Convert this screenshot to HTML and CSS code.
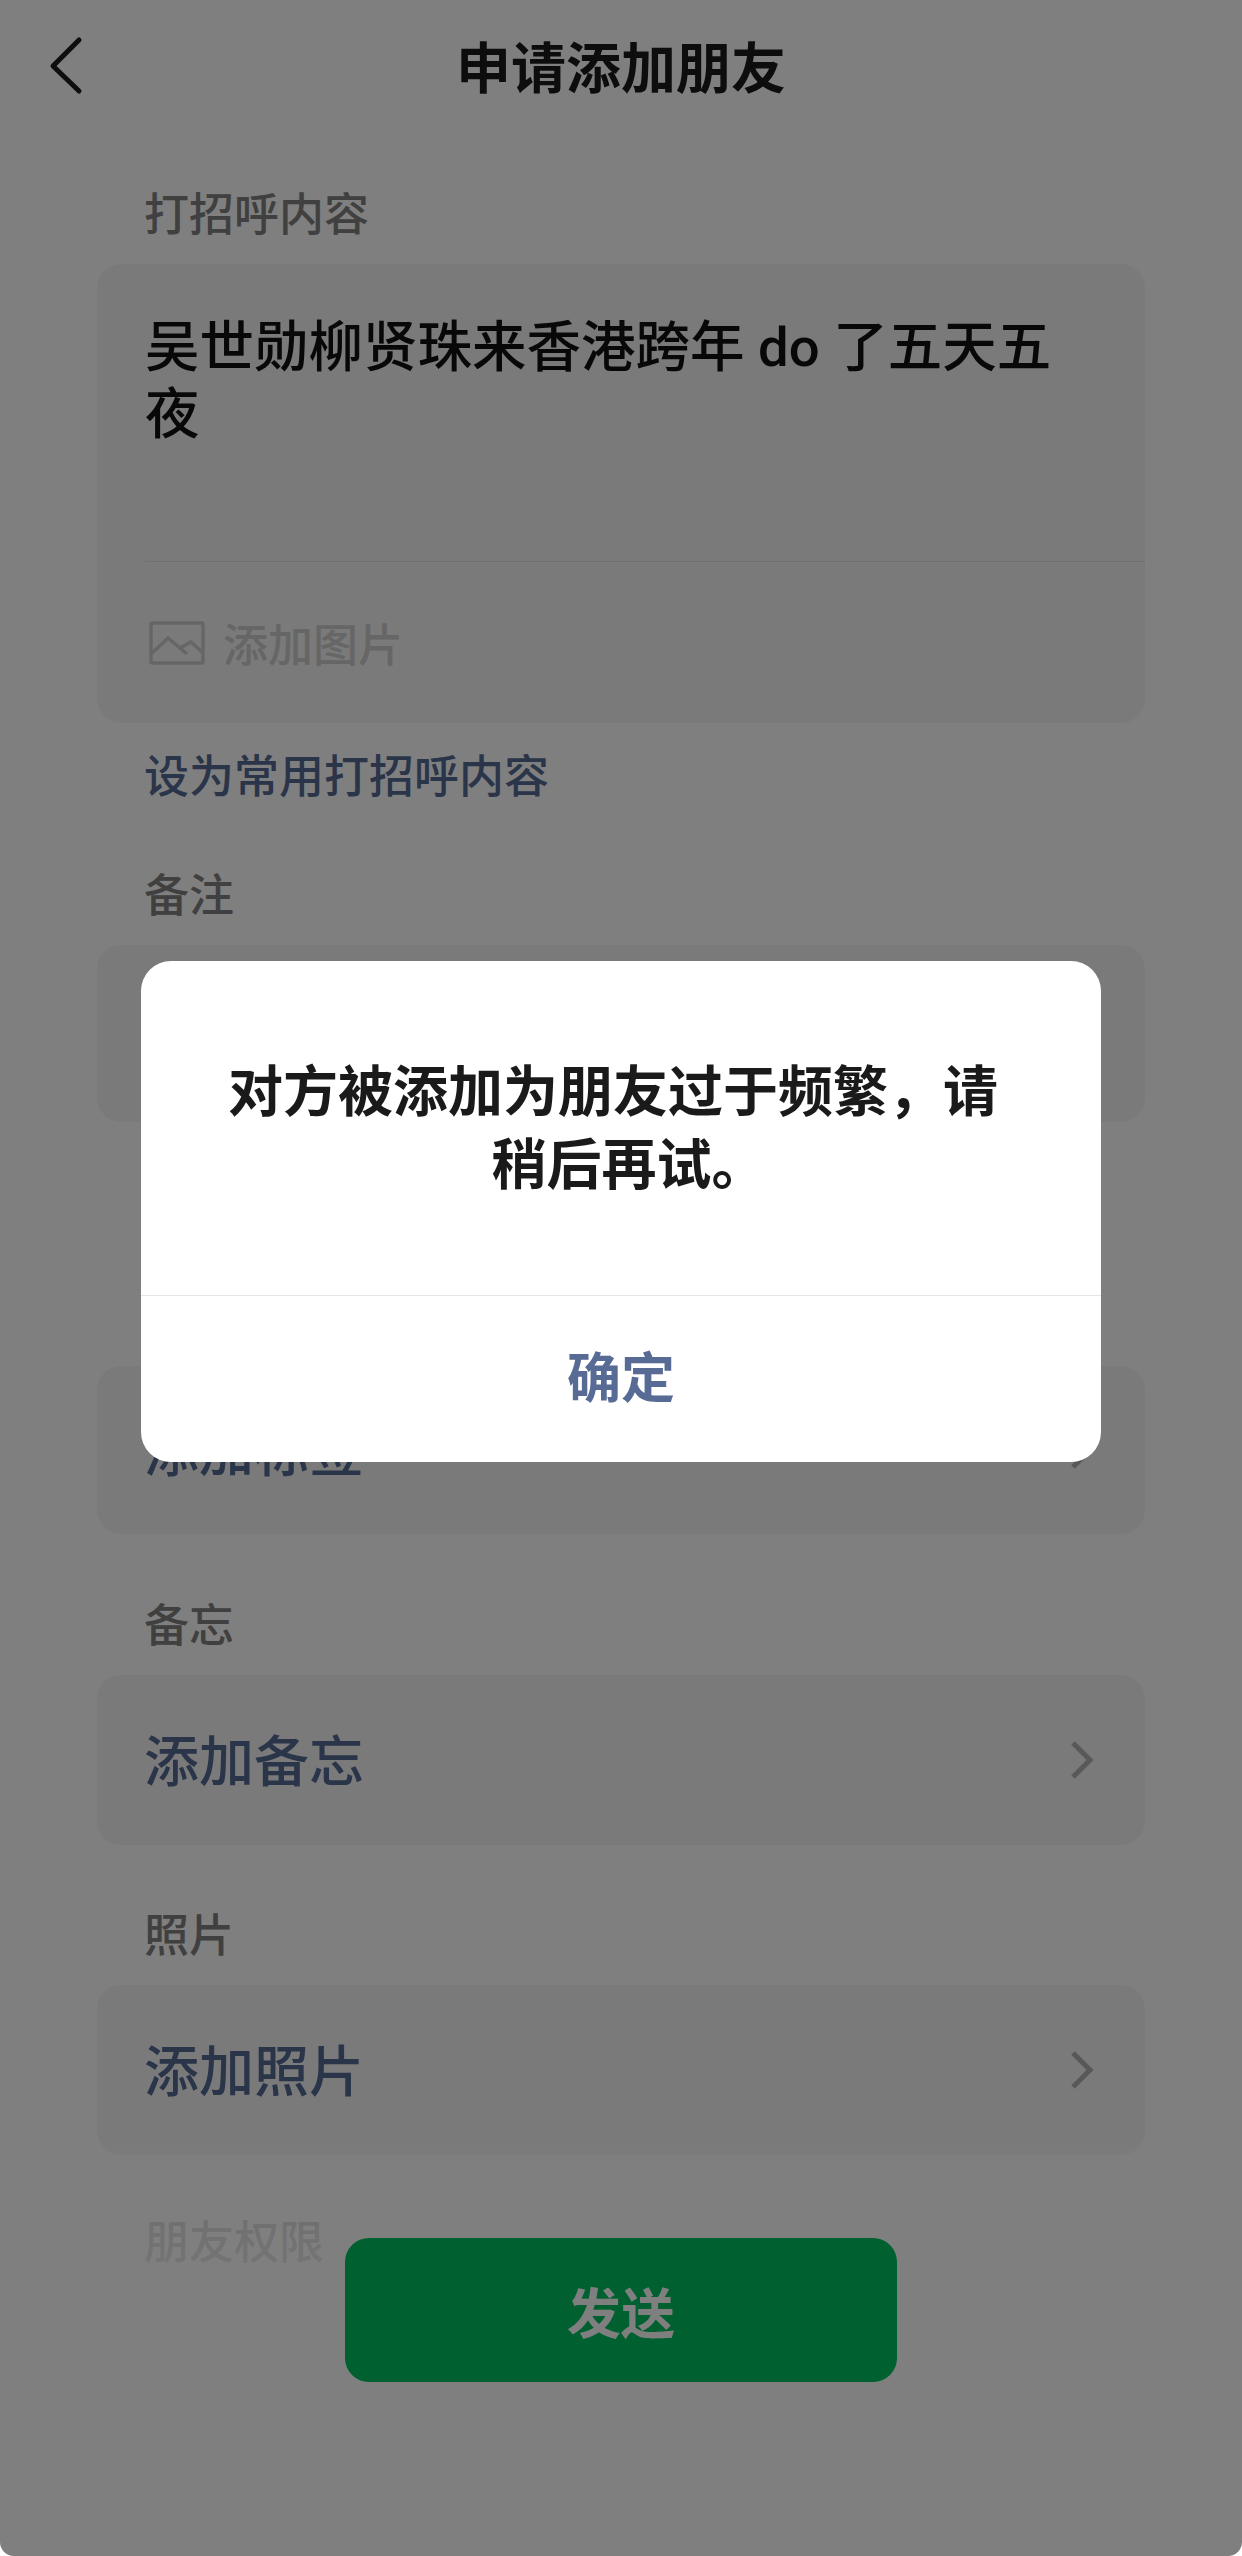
FILE: index.html
```html
<!DOCTYPE html>
<html lang="zh-CN">
<head>
    <meta charset="UTF-8">
    <meta name="viewport" content="width=device-width, initial-scale=1.0">
    <title>申请添加朋友</title>
    <link rel="stylesheet" href="styles.css">
</head>
<body>
    <div class="screen">
        <div class="nav">
            <svg class="back" width="36" height="60" viewBox="0 0 36 60">
                <path d="M31 5 L5 31 L31 56" fill="none" stroke="#1c1c1c" stroke-width="5" stroke-linecap="round" stroke-linejoin="round"/>
            </svg>
            <div class="nav-title">申请添加朋友</div>
        </div>

        <div class="content">
            <div class="label">打招呼内容</div>
            <div class="card">
                <div class="greeting">吴世勋柳贤珠来香港跨年 do 了五天五夜</div>
                <div class="add-image">
                    <svg width="56" height="44" viewBox="0 0 56 44">
                        <rect x="2" y="2" width="52" height="40" rx="1.5" fill="none" stroke="#cccccc" stroke-width="3.5"/>
                        <path d="M3 32 L19 17 L38 33 M31 27 L42 21 L53 31" fill="none" stroke="#cccccc" stroke-width="3.5"/>
                    </svg>
                    <span>添加图片</span>
                </div>
            </div>
            <div class="link">设为常用打招呼内容</div>

            <div class="label label-note">备注</div>
            <div class="card card-note"></div>

            <div class="card card-tag row">
                <span>添加标签</span>
                <svg class="arrow" width="24" height="40" viewBox="0 0 24 40">
                    <path d="M3 3 L20 20 L3 37" fill="none" stroke="#b0b0b0" stroke-width="5"/>
                </svg>
            </div>

            <div class="label label-memo">备忘</div>
            <div class="card row">
                <span>添加备忘</span>
                <svg class="arrow" width="24" height="40" viewBox="0 0 24 40">
                    <path d="M3 3 L20 20 L3 37" fill="none" stroke="#b0b0b0" stroke-width="5"/>
                </svg>
            </div>

            <div class="label label-photo">照片</div>
            <div class="card row">
                <span>添加照片</span>
                <svg class="arrow" width="24" height="40" viewBox="0 0 24 40">
                    <path d="M3 3 L20 20 L3 37" fill="none" stroke="#b0b0b0" stroke-width="5"/>
                </svg>
            </div>

            <div class="label label-perm">朋友权限</div>
        </div>

        <div class="footer">
            <button class="send">发送</button>
        </div>

        <div class="overlay">
            <div class="dialog">
                <div class="dialog-text">对方被添加为朋友过于频繁，请稍后再试。</div>
                <div class="dialog-ok">确定</div>
            </div>
        </div>
    </div>
</body>
</html>
```

FILE: styles.css
```css
html {
    background: #fff;
}
body {
    margin: 0;
    font-family: Roboto, "Noto Sans CJK SC", sans-serif;
}
.screen {
    position: relative;
    height: 2556px;
    overflow: hidden;
    background: #fff;
    border-radius: 0 0 14px 14px;
}
.nav {
    position: relative;
    height: 130px;
    display: flex;
    align-items: center;
    justify-content: center;
}
.nav-title {
    padding-bottom: 3px;
    font-size: 55px;
    font-weight: 700;
    color: #1a1a1a;
}
.back {
    position: absolute;
    left: 48px;
    top: 35px;
}
.content {
    padding: 54px 97px 0;
}
.label {
    height: 60px;
    line-height: 63px;
    padding-left: 47px;
    font-size: 45px;
    font-weight: 500;
    color: #808080;
}
.label-note {
    margin-top: 57px;
}
.label-memo {
    margin-top: 61px;
}
.label-photo {
    margin-top: 60px;
}
.label-perm {
    margin-top: 57px;
}
.card {
    margin-top: 20px;
    background: #f5f5f5;
    border-radius: 24px;
}
.greeting {
    box-sizing: border-box;
    height: 297px;
    padding: 50px 80px 0 48px;
    font-size: 54.5px;
    font-weight: 500;
    line-height: 67px;
    color: #111;
}
.add-image {
    height: 161px;
    margin-left: 48px;
    border-top: 1px solid #e0e0e0;
    display: flex;
    align-items: center;
    gap: 18px;
    padding-left: 4px;
    font-size: 45px;
    font-weight: 500;
    color: #cccccc;
}
.link {
    height: 60px;
    line-height: 60px;
    margin-top: 25px;
    padding-left: 47px;
    font-size: 45px;
    font-weight: 500;
    color: #576b95;
}
.card-note {
    height: 177px;
}
.row {
    height: 170px;
    padding: 0 51px 0 47px;
    display: flex;
    align-items: center;
    justify-content: space-between;
    font-size: 55px;
    font-weight: 500;
    color: #576b95;
}
.row span {
    padding-bottom: 6px;
}
.card-tag {
    height: 168px;
    margin-top: 244px;
}
/* the form fades out above the send button */
.footer {
    position: absolute;
    left: 0;
    right: 0;
    top: 2140px;
    bottom: 0;
    padding-top: 98px;
    display: flex;
    justify-content: center;
    align-items: flex-start;
    background: linear-gradient(rgba(255,255,255,0), rgba(255,255,255,0.76) 82px, rgba(255,255,255,0.82) 122px, #fff 150px);
}
.send {
    width: 552px;
    height: 144px;
    border: none;
    border-radius: 24px;
    background: #00c060;
    color: #fff;
    font-family: inherit;
    font-size: 54px;
    font-weight: 700;
}
.overlay {
    position: absolute;
    inset: 0;
    background: rgba(0,0,0,0.5);
    display: flex;
    justify-content: center;
    align-items: flex-start;
    padding-top: 961px;
}
.dialog {
    width: 960px;
    background: #fff;
    border-radius: 30px;
    overflow: hidden;
}
/* first line sits a little left of centre, second a little right */
.dialog-text {
    box-sizing: border-box;
    height: 334px;
    padding: 95px 89px 0 105px;
    text-align: center;
    text-indent: -32px;
    font-size: 55px;
    font-weight: 700;
    line-height: 73px;
    color: #1a1a1a;
}
.dialog-ok {
    height: 166px;
    line-height: 168px;
    border-top: 1px solid #e5e5e5;
    text-align: center;
    font-size: 54px;
    font-weight: 700;
    color: #576b95;
}
```
